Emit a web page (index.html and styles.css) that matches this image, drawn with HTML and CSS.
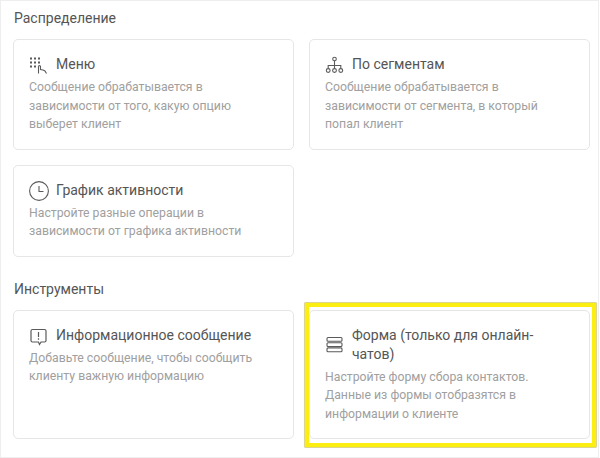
FILE: index.html
```html
<!DOCTYPE html>
<html lang="ru">
<head>
<meta charset="utf-8">
<title>Распределение</title>
<link rel="stylesheet" href="styles.css">
</head>
<body>
<main class="page">
  <section class="section">
    <h2 class="heading">Распределение</h2>
    <div class="grid">
      <article class="card">
        <div class="card-head">
          <svg class="icon" viewBox="0 0 20 20" fill="none" stroke="#5a5a5a" stroke-width="1.1">
            <g fill="#5a5a5a" stroke="none"><rect x="1" y="2.500" width="2" height="2"/><rect x="5" y="2.500" width="2" height="2"/><rect x="9" y="2.500" width="2" height="2"/><rect x="1" y="6.500" width="2" height="2"/><rect x="5" y="6.500" width="2" height="2"/><rect x="9" y="6.500" width="2" height="2"/><rect x="1" y="10.500" width="2" height="2"/><rect x="5" y="10.500" width="2" height="2"/></g>
            <path d="M9.500 18.500v-7a1 1 0 0 1 2 0V14.500l2.500 0.500 2 1 1.500 2.500"/>
          </svg>
          <h3 class="title">Меню</h3>
        </div>
        <p class="desc">Сообщение обрабатывается в зависимости от того, какую опцию выберет клиент</p>
      </article>
      <article class="card">
        <div class="card-head">
          <svg class="icon" viewBox="0 0 20 20" fill="none" stroke="#5a5a5a" stroke-width="1.1">
            <circle cx="9.500" cy="4" r="1.800"/><circle cx="3.200" cy="15.500" r="1.900"/><circle cx="9.500" cy="15.500" r="1.900"/><circle cx="15.800" cy="15.500" r="1.900"/>
            <path d="M9.500 5.800v7.800M3.200 13.600v-3.100h12.600v3.100"/>
          </svg>
          <h3 class="title">По сегментам</h3>
        </div>
        <p class="desc">Сообщение обрабатывается в зависимости от сегмента, в который попал клиент</p>
      </article>
      <article class="card">
        <div class="card-head">
          <svg class="icon" viewBox="0 0 20 20" fill="none" stroke="#5a5a5a" stroke-width="1.100">
            <circle cx="10" cy="10" r="9.400"/><path d="M10 5v5.500h4.500"/>
          </svg>
          <h3 class="title">График активности</h3>
        </div>
        <p class="desc">Настройте разные операции в зависимости от графика активности</p>
      </article>
    </div>
  </section>
  <section class="section">
    <h2 class="heading">Инструменты</h2>
    <div class="grid">
      <article class="card tall">
        <div class="card-head">
          <svg class="icon" viewBox="0 0 20 20" fill="none" stroke="#5a5a5a" stroke-width="1.200">
            <path d="M3.500 3.500h12a1.500 1.500 0 0 1 1.500 1.500v9.500a1.500 1.500 0 0 1-1.500 1.500h-3.500l-1.500 2.500-1-2.500H3.500A1.500 1.500 0 0 1 2 14.500V5a1.500 1.500 0 0 1 1.500-1.500z"/>
            <path d="M9.500 6v5M9.500 12.200v1.500"/>
          </svg>
          <h3 class="title">Информационное сообщение</h3>
        </div>
        <p class="desc">Добавьте сообщение, чтобы сообщить клиенту важную информацию</p>
      </article>
      <article class="card tall highlighted">
        <div class="card-head">
          <svg class="icon" viewBox="0 0 20 20" fill="none" stroke="#5a5a5a" stroke-width="1.100">
            <rect x="2" y="2.500" width="15" height="3.800" rx="1"/><rect x="2" y="7.700" width="15" height="3.800" rx="1"/><rect x="2" y="12.900" width="15" height="3.800" rx="1"/>
          </svg>
          <h3 class="title">Форма (только для онлайн-чатов)</h3>
        </div>
        <p class="desc">Настройте форму сбора контактов. Данные из формы отобразятся в информации о клиенте</p>
      </article>
    </div>
  </section>
</main>
</body>
</html>
```
FILE: styles.css
```css
* { box-sizing: border-box; }
html, body { margin: 0; height: 100%; background: #fff; }
body { font-family: Roboto, "Liberation Sans", sans-serif; }
.page {
  width: 599px;
  height: 458px;
  padding: 9px 8px 0 12px;
  border: 1px solid #eee;
  display: flex;
  flex-direction: column;
  gap: 24px;
  overflow: hidden;
}
.heading {
  margin: 0 0 12px 1px;
  font-size: 14px;
  line-height: 17px;
  font-weight: 400;
  color: #555;
}
.grid {
  display: grid;
  grid-template-columns: 281px 281px;
  column-gap: 15px;
  row-gap: 15px;
}
.card {
  border: 1px solid #e6e6e6;
  border-radius: 5px;
  padding: 15px 15px 14.500px;
  background: #fff;
}
.tall { height: 129px; }
.card-head {
  display: flex;
  align-items: center;
  gap: 7px;
}
.icon { width: 20px; height: 20px; flex: none; }
.title {
  margin: 0;
  font-size: 14px;
  line-height: 19.500px;
  font-weight: 400;
  color: #555;
}
.desc {
  margin: 3px 0 0;
  font-size: 12.250px;
  line-height: 18.700px;
  color: #a0a0a0;
}
.highlighted { position: relative; }
.highlighted::after {
  content: "";
  position: absolute;
  inset: -8px -7px -9px -5px;
  border: 4px solid #fdee12;
  box-shadow: 0 0 0 0.500px #b8ab20;
  pointer-events: none;
}
```
